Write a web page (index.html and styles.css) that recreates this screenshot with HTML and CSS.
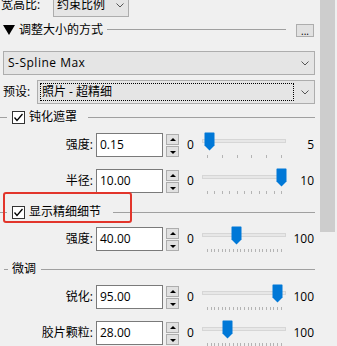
FILE: index.html
```html
<!DOCTYPE html>
<html lang="zh-CN">
<head>
    <meta charset="UTF-8">
    <title>调整大小</title>
    <link rel="stylesheet" href="styles.css">
</head>
<body>
    <div class="page">
        <div class="panel">
            <div class="row row-top">
                <span class="top-label">宽高比:</span>
                <div class="select select-small">
                    <span class="select-text">约束比例</span>
                    <svg class="chevron" width="8" height="5" viewBox="0 0 8 5"><polyline points="0.5,0.5 4,4 7.5,0.5" /></svg>
                </div>
            </div>

            <div class="head head-resize">
                <svg class="caret" width="12" height="10" viewBox="0 0 12 10"><polygon points="0,0 12,0 6,10" /></svg>
                <span class="head-title">调整大小的方式</span>
                <span class="rule rule-resize"></span>
                <button class="more">...</button>
            </div>

            <div class="select select-wide">
                <span class="select-text spline">S-Spline Max</span>
                <svg class="chevron" width="8" height="5" viewBox="0 0 8 5"><polyline points="0.5,0.5 4,4 7.5,0.5" /></svg>
            </div>

            <div class="row row-preset">
                <span class="preset-label">预设:</span>
                <div class="select select-preset">
                    <span class="focus">照片 - 超精细</span>
                    <svg class="chevron" width="8" height="5" viewBox="0 0 8 5"><polyline points="0.5,0.5 4,4 7.5,0.5" /></svg>
                </div>
            </div>

            <div class="head head-check head-mask">
                <span class="lead"></span>
                <span class="checkbox"><svg width="11" height="11" viewBox="0 0 11 11"><polyline points="1.5,5.5 4,8.5 9.5,2" /></svg></span>
                <span class="head-title">钝化遮罩</span>
                <span class="rule"></span>
            </div>

            <div class="row param param-first">
                <span class="param-label">强度:</span>
                <span class="field">0.15</span>
                <span class="spin"><span class="spin-up"></span><span class="spin-down"></span></span>
                <span class="min">0</span>
                <div class="slider" data-min="0" data-max="5" data-value="0.15" data-ticks="6"></div>
                <span class="max">5</span>
            </div>

            <div class="row param">
                <span class="param-label">半径:</span>
                <span class="field">10.00</span>
                <span class="spin"><span class="spin-up"></span><span class="spin-down"></span></span>
                <span class="min">0</span>
                <div class="slider" data-min="0" data-max="10" data-value="10" data-ticks="11"></div>
                <span class="max">10</span>
            </div>

            <div class="head head-check head-detail">
                <span class="lead"></span>
                <span class="checkbox"><svg width="11" height="11" viewBox="0 0 11 11"><polyline points="1.5,5.5 4,8.5 9.5,2" /></svg></span>
                <span class="head-title">显示精细细节</span>
                <span class="rule"></span>
            </div>

            <div class="row param param-after-head">
                <span class="param-label">强度:</span>
                <span class="field">40.00</span>
                <span class="spin"><span class="spin-up"></span><span class="spin-down"></span></span>
                <span class="min">0</span>
                <div class="slider" data-min="0" data-max="100" data-value="40" data-ticks="21"></div>
                <span class="max">100</span>
            </div>

            <div class="head head-plain">
                <span class="lead lead-plain"></span>
                <span class="head-title">微调</span>
                <span class="rule"></span>
            </div>

            <div class="row param param-first">
                <span class="param-label">锐化:</span>
                <span class="field">95.00</span>
                <span class="spin"><span class="spin-up"></span><span class="spin-down"></span></span>
                <span class="min">0</span>
                <div class="slider" data-min="0" data-max="100" data-value="95" data-ticks="21"></div>
                <span class="max">100</span>
            </div>

            <div class="row param">
                <span class="param-label">胶片颗粒:</span>
                <span class="field">28.00</span>
                <span class="spin"><span class="spin-up"></span><span class="spin-down"></span></span>
                <span class="min">0</span>
                <div class="slider" data-min="0" data-max="100" data-value="28" data-ticks="21"></div>
                <span class="max">100</span>
            </div>
        </div>

        <div class="scrollbar">
            <div class="scroll-thumb"></div>
        </div>
    </div>

    <div class="highlight"></div>

    <script src="script.js"></script>
</body>
</html>
```

FILE: styles.css
```css
* {
    box-sizing: border-box;
}

body {
    margin: 0;
    background-color: #f0f0f0;
    font-family: "Open Sans", "Noto Sans CJK SC", sans-serif;
    font-size: 12px;
    line-height: 14px;
    color: #000;
    overflow: hidden;
    position: relative;
}

.page {
    display: flex;
    height: 346px;
}

.panel {
    width: 320px;
    padding: 0 5px 0 3px;
    margin-top: -7px;
    display: flex;
    flex-direction: column;
}

.scrollbar {
    width: 15px;
}

.scroll-thumb {
    height: 232px;
    background-color: #cdcdcd;
}

.row {
    display: flex;
    align-items: center;
    height: 24px;
    flex-shrink: 0;
}

/* combo boxes */
.select {
    display: flex;
    align-items: center;
    height: 24px;
    background-color: #e5e5e5;
    border: 1px solid #adadad;
}

.select-text {
    flex: 1;
    padding-left: 3px;
    white-space: nowrap;
}

.chevron {
    fill: none;
    stroke: #555;
    stroke-width: 1;
    margin-right: 5px;
}

.top-label {
    width: 53px;
    margin-left: -3px;
    padding-left: 1px;
}

.select-small {
    width: 76px;
}

.select-small .chevron {
    margin-right: 4px;
}

.select-wide {
    margin-top: 14px;
    flex-shrink: 0;
}

.spline {
    padding-left: 4px;
    letter-spacing: 0.5px;
}

.row-preset {
    margin-top: 5px;
}

.preset-label {
    width: 34px;
}

.select-preset {
    flex: 1;
    padding: 2px 0 2px 2px;
}

.focus {
    flex: 1;
    height: 18px;
    line-height: 16px;
    padding-left: 1px;
    border: 1px dotted #000;
    margin-right: 7px;
    white-space: nowrap;
}

/* group headers */
.head {
    display: flex;
    align-items: center;
    height: 14px;
    flex-shrink: 0;
}

.head-resize {
    margin-top: 6px;
}

.caret {
    fill: #000;
    margin-right: 4px;
}

.head-title {
    white-space: nowrap;
}

.rule {
    flex: 1;
    height: 1px;
    background-color: #a0a0a0;
}

.rule-resize {
    margin: -2px 10px 0 4px;
}

.more {
    width: 18px;
    height: 13px;
    margin-top: 1px;
    margin-right: 1px;
    padding: 0;
    font-family: "Open Sans", sans-serif;
    font-size: 10px;
    line-height: 13px;
    color: #000;
    background-color: #e1e1e1;
    border: 1px solid #adadad;
    border-radius: 0;
}

.head-mask {
    margin-top: 6px;
}

.head-detail {
    margin-top: 12px;
}

.head-plain {
    margin-top: 11px;
}

.lead {
    width: 7px;
    height: 1px;
    margin-left: -3px;
    margin-right: 5px;
    background-color: #a0a0a0;
}

.lead-plain {
    width: 4px;
    margin-left: 1px;
    margin-right: 4px;
}

.checkbox {
    width: 13px;
    height: 13px;
    margin-right: 4px;
    border: 1px solid #333;
    background-color: #fff;
    display: flex;
    align-items: center;
    justify-content: center;
}

.checkbox svg {
    fill: none;
    stroke: #000;
    stroke-width: 1.3;
}

.head-mask .rule {
    margin-left: 11px;
}

.head-detail .rule {
    margin-left: 12px;
}

.head-plain .rule {
    margin-left: 5px;
}

/* value rows */
.param {
    margin-top: 12px;
}

.param-first {
    margin-top: 9px;
}

.param-after-head {
    margin-top: 8px;
}

.param-label {
    width: 90px;
    margin-right: 3px;
    text-align: right;
    white-space: nowrap;
}

.field {
    width: 67px;
    height: 24px;
    padding-left: 3px;
    line-height: 22px;
    background-color: #fff;
    border: 1px solid #7a7a7a;
}

.spin {
    display: flex;
    flex-direction: column;
    gap: 1px;
    margin-left: 3px;
}

.spin-up,
.spin-down {
    position: relative;
    width: 13px;
    height: 11px;
    background-color: #e1e1e1;
    border: 1px solid #adadad;
}

.spin-up::before,
.spin-down::before {
    content: "";
    position: absolute;
    left: 3px;
    top: 3px;
    border-left: 3px solid transparent;
    border-right: 3px solid transparent;
}

.spin-up::before {
    border-bottom: 3px solid #000;
}

.spin-down::before {
    top: 4px;
    border-top: 3px solid #000;
}

.min {
    width: 8px;
    margin-left: 8px;
    margin-right: 7px;
}

.slider {
    position: relative;
    width: 84px;
    height: 24px;
}

.track {
    margin-top: 6px;
    height: 4px;
    background-color: #e7e7e7;
    border: 1px solid #d6d6d6;
}

.ticks {
    display: flex;
    justify-content: space-between;
    width: 75px;
    height: 3px;
    margin: 12px 0 0 5px;
}

.tick {
    width: 1px;
    background-color: #b4b4b4;
}

.thumb {
    position: absolute;
    top: -1px;
    width: 11px;
    height: 19px;
    fill: #0078d7;
}

.max {
    flex: 1;
    text-align: right;
    padding-right: 1px;
}

/* annotation drawn over the screenshot */
.highlight {
    position: absolute;
    left: 3px;
    top: 192px;
    width: 129px;
    height: 31px;
    border: 2px solid #e2352b;
    border-radius: 3px;
}
```

FILE: script.js
```js
document.querySelectorAll('.slider').forEach(function(slider) {
    const min = parseFloat(slider.dataset.min);
    const max = parseFloat(slider.dataset.max);
    const value = parseFloat(slider.dataset.value);
    const count = parseInt(slider.dataset.ticks, 10);

    const track = document.createElement('div');
    track.className = 'track';
    slider.appendChild(track);

    const ticks = document.createElement('div');
    ticks.className = 'ticks';
    for (let i = 0; i < count; i++) {
        const tick = document.createElement('span');
        tick.className = 'tick';
        ticks.appendChild(tick);
    }
    slider.appendChild(ticks);

    // thumb centre runs from 5px to 79px inside the slider
    const frac = (value - min) / (max - min);
    const svgNS = 'http://www.w3.org/2000/svg';
    const thumb = document.createElementNS(svgNS, 'svg');
    thumb.setAttribute('class', 'thumb');
    thumb.setAttribute('viewBox', '0 0 11 19');
    thumb.style.left = Math.round(frac * 74 - 0.5) + 'px';
    const shape = document.createElementNS(svgNS, 'polygon');
    shape.setAttribute('points', '0.5,1 1,0.5 10,0.5 10.5,1 10.5,13.5 5.5,18.5 0.5,13.5');
    thumb.appendChild(shape);
    slider.appendChild(thumb);
});
```
